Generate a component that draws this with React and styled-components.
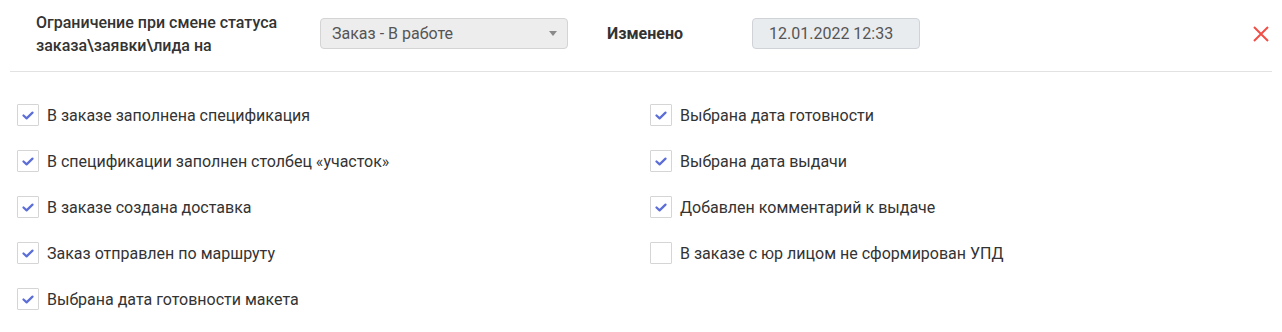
import React from "react";
import styled, { createGlobalStyle } from "styled-components";

const Global = createGlobalStyle`
  html, body { margin: 0; padding: 0; background: #fff; }
  body { font-family: Roboto, "Noto Sans", sans-serif; color: #333; }
`;

const Page = styled.div`
  width: 1262px;
  padding: 0 10px;
`;

const Header = styled.div`
  display: flex;
  align-items: center;
  box-sizing: border-box;
  height: 72px;
  padding: 0 2px 4px 26px;
  border-bottom: 1px solid #e2e2e2;
`;

const Title = styled.div`
  width: 284px;
  font-size: 16px;
  font-weight: 500;
  line-height: 23px;
  color: #333;
`;

const Select = styled.div`
  width: 248px;
  height: 31px;
  box-sizing: border-box;
  border: 1px solid #d4d4d4;
  border-radius: 4px;
  background: #ededed;
  display: flex;
  align-items: center;
  justify-content: space-between;
  padding: 0 10px 0 11px;
  font-size: 16px;
  color: #555;
`;

const Caret = styled.span`
  width: 0;
  height: 0;
  border-left: 4px solid transparent;
  border-right: 4px solid transparent;
  border-top: 5px solid #8a8a8a;
`;

const Label = styled.div`
  margin-left: 39px;
  width: 145px;
  font-size: 16px;
  font-weight: 700;
  color: #333;
`;

const DateBox = styled.div`
  width: 168px;
  height: 31px;
  box-sizing: border-box;
  border: 1px solid #cfd3d8;
  border-radius: 4px;
  background: #e9ecef;
  display: flex;
  align-items: center;
  padding-left: 16px;
  font-size: 16px;
  color: #555;
`;

const Close = styled.button`
  margin-left: auto;
  border: 0;
  background: none;
  padding: 0;
  width: 18px;
  height: 18px;
  display: flex;
  align-items: center;
  justify-content: center;
  cursor: pointer;
`;

const List = styled.div`
  display: grid;
  grid-template-columns: 633px 1fr;
  padding: 20px 0 0 7px;
`;

const Column = styled.div`
  display: flex;
  flex-direction: column;
`;

const Row = styled.label`
  display: flex;
  align-items: center;
  height: 46px;
  gap: 8px;
  font-size: 16px;
  color: #333;
`;

const Box = styled.span`
  width: 22px;
  height: 22px;
  box-sizing: border-box;
  border: 1px solid #d5d5d5;
  border-radius: 1px;
  background: #fff;
  display: flex;
  align-items: center;
  justify-content: center;
`;

const Check = () => (
  <svg width="12" height="9" viewBox="0 0 12 9">
    <path d="M1.5 4.5 L4.6 7.4 L10.5 1.6" fill="none" stroke="#5b6ed8" strokeWidth="2.2" strokeLinecap="round" strokeLinejoin="round" />
  </svg>
);

const Item = ({ checked, children }) => (
  <Row>
    <Box>{checked && <Check />}</Box>
    <span>{children}</span>
  </Row>
);

const left = [
  ["В заказе заполнена спецификация", true],
  ["В спецификации заполнен столбец «участок»", true],
  ["В заказе создана доставка", true],
  ["Заказ отправлен по маршруту", true],
  ["Выбрана дата готовности макета", true],
];
const right = [
  ["Выбрана дата готовности", true],
  ["Выбрана дата выдачи", true],
  ["Добавлен комментарий к выдаче", true],
  ["В заказе с юр лицом не сформирован УПД", false],
];

export default function App() {
  return (
    <Page>
      <Global />
      <Header>
        <Title>Ограничение при смене статуса заказа\заявки\лида на</Title>
        <Select>
          <span>Заказ - В работе</span>
          <Caret />
        </Select>
        <Label>Изменено</Label>
        <DateBox>12.01.2022 12:33</DateBox>
        <Close aria-label="close">
          <svg width="16" height="16" viewBox="0 0 16 16">
            <path d="M1 1 L15 15 M15 1 L1 15" stroke="#ef4f47" strokeWidth="2" />
          </svg>
        </Close>
      </Header>
      <List>
        <Column>
          {left.map(([t, c]) => (
            <Item key={t} checked={c}>{t}</Item>
          ))}
        </Column>
        <Column>
          {right.map(([t, c]) => (
            <Item key={t} checked={c}>{t}</Item>
          ))}
        </Column>
      </List>
    </Page>
  );
}
